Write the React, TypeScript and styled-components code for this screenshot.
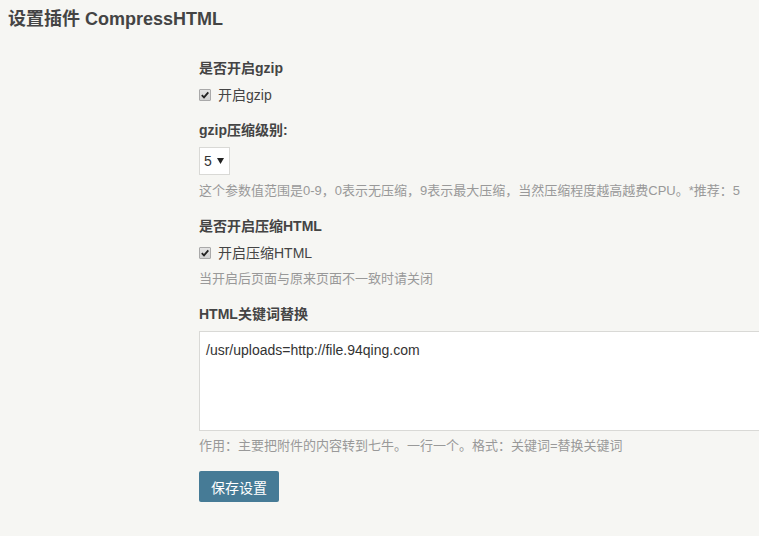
import React from "react";
import styled, { createGlobalStyle } from "styled-components";

const Global = createGlobalStyle`
  html, body { margin: 0; padding: 0; overflow: hidden; }
  body {
    background: #f6f6f3;
    color: #444;
    font-family: "Liberation Sans", Arial, "Noto Sans CJK SC", sans-serif;
    font-size: 14px;
  }
`;

const Page = styled.div`
  width: 759px;
  height: 536px;
  overflow: hidden;
`;

const Title = styled.h2`
  margin: 0;
  padding: 7px 8px 0;
  font-size: 18px;
  line-height: 24px;
  font-weight: bold;
  color: #444;
`;

const Form = styled.form`
  display: flex;
  flex-direction: column;
  gap: 15px;
  padding: 27px 0 0 199px;
`;

const Option = styled.div`
  display: flex;
  flex-direction: column;
  align-items: flex-start;
`;

const Label = styled.div`
  font-weight: bold;
  line-height: 20px;
  margin-bottom: 7px;
  color: #444;
`;

const CheckRow = styled.label`
  display: flex;
  align-items: center;
  gap: 7px;
  line-height: 20px;
  color: #444;
`;

const Box = styled.span`
  width: 10px;
  height: 10px;
  border: 1px solid #a9a9a9;
  border-radius: 1px;
  background: linear-gradient(#e4e4e4, #d2d2d2);
  display: inline-flex;
  align-items: center;
  justify-content: center;
`;

const SelectBox = styled.div`
  height: 26px;
  width: 25px;
  border: 1px solid #d9d9d6;
  background: #fff;
  display: flex;
  align-items: center;
  gap: 5px;
  padding-left: 4px;
  color: #333;
`;

const Desc = styled.div<{ $top?: number }>`
  margin-top: ${(p) => p.$top ?? 6}px;
  font-size: 13px;
  line-height: 20px;
  color: #999;
`;

const TextArea = styled.textarea`
  width: 640px;
  height: 84px;
  border: 1px solid #d9d9d6;
  background: #fff;
  padding: 8px 6px 6px;
  font-family: "Liberation Sans", Arial, sans-serif;
  font-size: 14px;
  line-height: 20px;
  color: #333;
  resize: none;
  outline: none;
  margin: 0;
`;

const Button = styled.button`
  align-self: flex-start;
  height: 31px;
  padding: 0 12px;
  border: none;
  border-radius: 2px;
  background: #467b96;
  color: #fff;
  font-family: "Liberation Sans", Arial, "Noto Sans CJK SC", sans-serif;
  font-size: 14px;
  cursor: pointer;
`;

const Check = () => (
  <Box>
    <svg width="8" height="8" viewBox="0 0 8 8">
      <path d="M0.8 4.2 L3 6.4 L7.3 1.4" fill="none" stroke="#222" strokeWidth="1.8" />
    </svg>
  </Box>
);

export default function App() {
  return (
    <Page>
      <Global />
      <Title>设置插件 CompressHTML</Title>
      <Form onSubmit={(e) => e.preventDefault()}>
        <Option>
          <Label>是否开启gzip</Label>
          <CheckRow>
            <Check />
            开启gzip
          </CheckRow>
        </Option>
        <Option>
          <Label>gzip压缩级别:</Label>
          <SelectBox>
            <span>5</span>
            <svg width="7" height="6" viewBox="0 0 7 6">
              <path d="M0 0 H7 L3.5 6 Z" fill="#222" />
            </svg>
          </SelectBox>
          <Desc>这个参数值范围是0-9，0表示无压缩，9表示最大压缩，当然压缩程度越高越费CPU。*推荐：5</Desc>
        </Option>
        <Option>
          <Label>是否开启压缩HTML</Label>
          <CheckRow>
            <Check />
            开启压缩HTML
          </CheckRow>
          <Desc>当开启后页面与原来页面不一致时请关闭</Desc>
        </Option>
        <Option>
          <Label>HTML关键词替换</Label>
          <TextArea defaultValue="/usr/uploads=http://file.94qing.com" />
          <Desc $top={5}>作用：主要把附件的内容转到七牛。一行一个。格式：关键词=替换关键词</Desc>
        </Option>
        <Button type="submit">保存设置</Button>
      </Form>
    </Page>
  );
}
